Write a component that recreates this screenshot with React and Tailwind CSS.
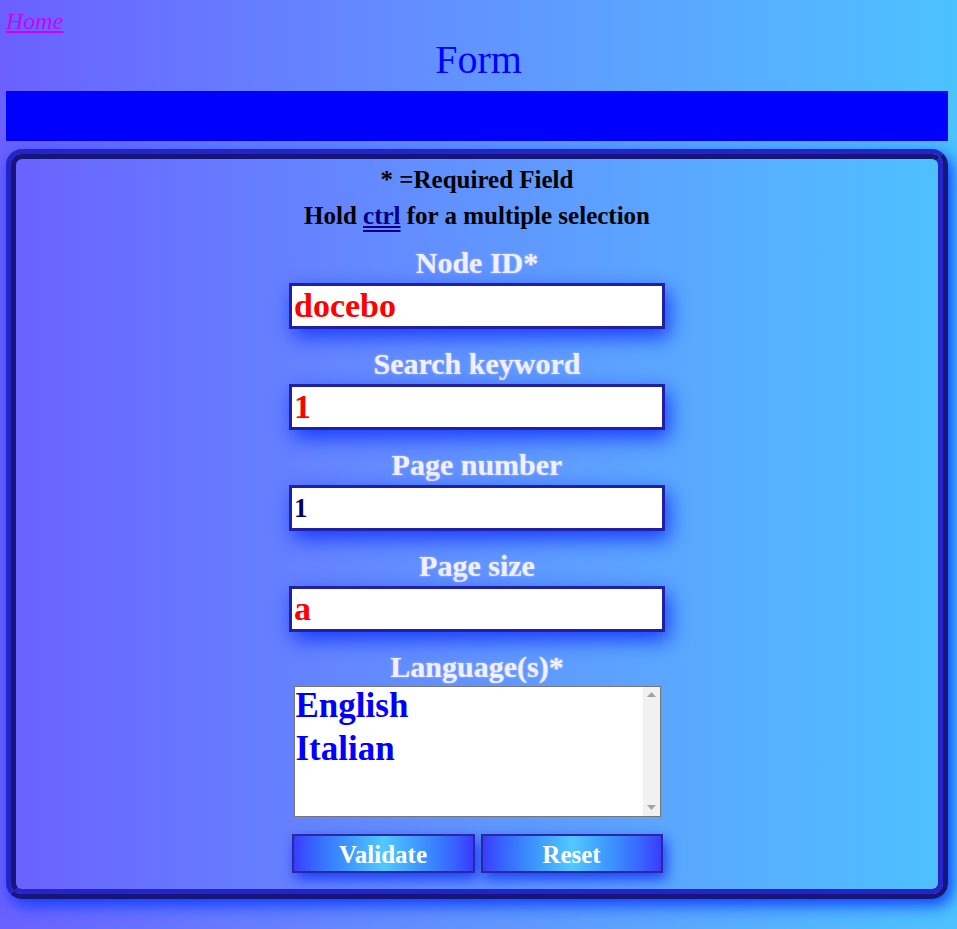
export default function App() {
  const fields = [
    { label: "Node ID*", value: "docebo", bad: true },
    { label: "Search keyword", value: "1", bad: true },
    { label: "Page number", value: "1", bad: false },
    { label: "Page size", value: "a", bad: true },
  ]

  return (
    <div className="min-h-screen w-full bg-gradient-to-r from-[#6a60ff] to-[#4cc2ff] font-['Liberation_Serif',serif] pb-[30px]">
      <div className="px-[6px] pt-2 leading-[27px]">
        <a href="#" className="text-[24px] italic underline text-[#cc00ff]">
          Home
        </a>
      </div>
      <h1 className="text-center text-[40px] leading-[46px] text-[#0000ff]">Form</h1>
      <div className="ml-[6px] mt-[8px] h-[50px] w-[942px] bg-[#0000ff]" />

      {/* fieldset with ridge border */}
      <div className="ml-[6px] mt-[8px] w-[942px] rounded-[16px] border-[5px] border-t-[#2424c8] border-l-[#2424c8] border-b-[#15157a] border-r-[#15157a] shadow-[4px_6px_16px_#0a3cff]">
        <div className="h-[740px] rounded-[11px] border-[5px] border-t-[#15157a] border-l-[#15157a] border-b-[#2424c8] border-r-[#2424c8] flex flex-col items-center">
          <p className="mt-[7px] text-[25px] leading-[28px] font-bold text-black">* =Required Field</p>
          <p className="mt-2 text-[25px] leading-[28px] font-bold text-black">
            Hold{" "}
            <span className="underline decoration-double text-[#000080]">ctrl</span>{" "}
            for a multiple selection
          </p>

          <div className="mt-[16px] flex flex-col items-center">
            {fields.map((f) => (
              <div key={f.label} className="flex flex-col items-center mb-[18px]">
                <label className="h-[34px] leading-[34px] text-[30px] font-bold text-[#f0f0ff] [text-shadow:0_0_2px_#c8c8ff]">
                  {f.label}
                </label>
                <div className="mt-[3px] h-[46px] w-[376px] bg-white border-[3px] border-[#2020a4] shadow-[4px_8px_20px_#1a3cff] flex items-center px-[2px]">
                  <span
                    className={
                      f.bad
                        ? "text-[34px] font-bold text-[#ff0000] leading-none"
                        : "text-[27px] font-bold text-[#000066] leading-none"
                    }
                  >
                    {f.value}
                  </span>
                </div>
              </div>
            ))}

            <label className="h-[34px] leading-[34px] text-[30px] font-bold text-[#f0f0ff] [text-shadow:0_0_2px_#c8c8ff]">
              Language(s)*
            </label>
            <div className="mt-[2px] h-[131px] w-[367px] bg-white border border-[#767676] flex">
              <div className="flex-1 pl-[1px] text-[35px] font-bold text-[#0000ff]">
                <div className="h-[43px] leading-[38px]">English</div>
                <div className="h-[43px] leading-[38px]">Italian</div>
              </div>
              <div className="w-[17px] bg-[#f1f1f1] flex flex-col justify-between items-center py-[5px]">
                <svg width="9" height="6" viewBox="0 0 9 6">
                  <path d="M0 5h9L4.5 0z" fill="#a3a3a3" />
                </svg>
                <svg width="9" height="6" viewBox="0 0 9 6">
                  <path d="M0 0h9L4.5 5z" fill="#a3a3a3" />
                </svg>
              </div>
            </div>

            <div className="mt-[17px] flex gap-[6px]">
              <button className="h-[39px] w-[183px] border-2 border-[#2a2a9a] bg-gradient-to-r from-[#3a3aff] via-[#52c8ff] to-[#3a3aff] text-white text-[25px] font-bold shadow-[3px_6px_14px_#1a3cff]">
                Validate
              </button>
              <button className="h-[39px] w-[182px] border-2 border-[#2a2a9a] bg-gradient-to-r from-[#3a3aff] via-[#52c8ff] to-[#3a3aff] text-white text-[25px] font-bold shadow-[3px_6px_14px_#1a3cff]">
                Reset
              </button>
            </div>
          </div>
        </div>
      </div>
    </div>
  )
}
